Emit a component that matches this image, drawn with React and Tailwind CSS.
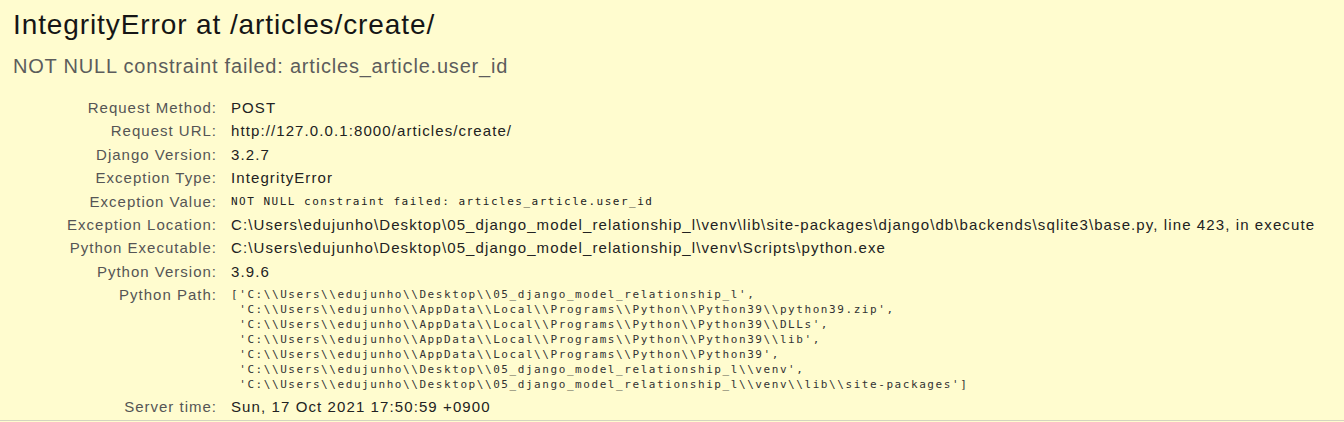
import React from 'react';

const rows = [
  ['Request Method:', 'POST'],
  ['Request URL:', 'http://127.0.0.1:8000/articles/create/'],
  ['Django Version:', '3.2.7'],
  ['Exception Type:', 'IntegrityError'],
  ['Exception Value:', 'NOT NULL constraint failed: articles_article.user_id', 'mono'],
  ['Exception Location:', 'C:\\Users\\edujunho\\Desktop\\05_django_model_relationship_l\\venv\\lib\\site-packages\\django\\db\\backends\\sqlite3\\base.py, line 423, in execute'],
  ['Python Executable:', 'C:\\Users\\edujunho\\Desktop\\05_django_model_relationship_l\\venv\\Scripts\\python.exe'],
  ['Python Version:', '3.9.6'],
];

const pythonPath = [
  "['C:\\\\Users\\\\edujunho\\\\Desktop\\\\05_django_model_relationship_l',",
  " 'C:\\\\Users\\\\edujunho\\\\AppData\\\\Local\\\\Programs\\\\Python\\\\Python39\\\\python39.zip',",
  " 'C:\\\\Users\\\\edujunho\\\\AppData\\\\Local\\\\Programs\\\\Python\\\\Python39\\\\DLLs',",
  " 'C:\\\\Users\\\\edujunho\\\\AppData\\\\Local\\\\Programs\\\\Python\\\\Python39\\\\lib',",
  " 'C:\\\\Users\\\\edujunho\\\\AppData\\\\Local\\\\Programs\\\\Python\\\\Python39',",
  " 'C:\\\\Users\\\\edujunho\\\\Desktop\\\\05_django_model_relationship_l\\\\venv',",
  " 'C:\\\\Users\\\\edujunho\\\\Desktop\\\\05_django_model_relationship_l\\\\venv\\\\lib\\\\site-packages']",
];

const sans = "font-['Liberation_Sans',Arial,sans-serif]";
const mono = "font-['DejaVu_Sans_Mono',monospace]";

function Row({ label, children, valueClass }) {
  return (
    <div className="flex items-start">
      <div className={`w-[217px] shrink-0 text-right text-[15px] leading-[23.4px] tracking-[1px] text-[#555] ${sans}`}>{label}</div>
      <div className={`pl-[14px] whitespace-nowrap ${valueClass}`}>{children}</div>
    </div>
  );
}

const sansValue = `text-[15px] leading-[23.4px] tracking-[1.1px] text-[#222] ${sans}`;
const monoValue = `text-[11px] leading-[23.4px] tracking-[1.5px] text-[#222] ${mono}`;

export default function App() {
  return (
    <div className="w-[1344px] h-[422px] bg-[#fffccf] overflow-hidden">
      <div className="px-[13px] pt-[8px] pb-[1px] border-b border-[#d4d4c0]">
        <h1 className={`text-[28px] leading-[34px] tracking-[0.9px] text-[#151515] ${sans}`}>IntegrityError at /articles/create/</h1>
        <div className={`mt-[12px] text-[20px] leading-[24px] tracking-[0.8px] text-[#5c5c5c] ${sans}`}>NOT NULL constraint failed: articles_article.user_id</div>

        <div className="mt-[18px] -ml-[13px]">
          {rows.map(([label, value, kind]) => (
            <Row key={label} label={label} valueClass={kind === 'mono' ? monoValue : sansValue}>
              {value}
            </Row>
          ))}
          <Row label="Python Path:" valueClass="pt-[4px] pb-[3px]">
            <pre className={`text-[11px] leading-[15px] tracking-[1.57px] text-[#333] ${mono}`}>{pythonPath.join('\n')}</pre>
          </Row>
          <Row label="Server time:" valueClass={sansValue}>
            Sun, 17 Oct 2021 17:50:59 +0900
          </Row>
        </div>
      </div>
    </div>
  );
}
